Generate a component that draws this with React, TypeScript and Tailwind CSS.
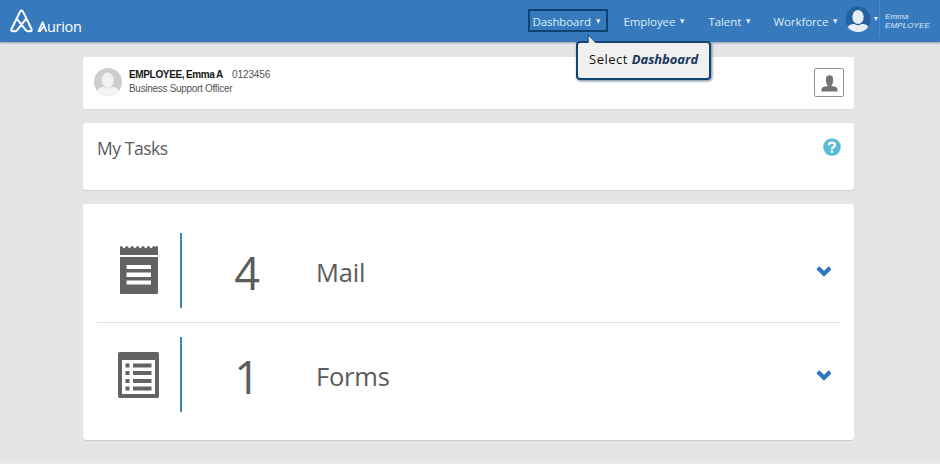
import React from "react";

function AurionLogo() {
  return (
    <div className="ml-[10px] mt-[8px] flex h-[30px] w-[74px] shrink-0">
      <svg className="h-[26px] w-[37px] shrink-0" viewBox="10 8 37 26" fill="none" stroke="#fff" strokeLinecap="round" strokeLinejoin="round">
        <path d="M26.4 18.4L22.8 11.4Q21.5 9.6 20.2 11.4L11.4 29.2Q10.8 31.3 12.8 31.3H15.3Q16.3 31.3 17 30.3L26.4 18.4M16.6 18.4L26 30.3Q26.7 31.3 27.7 31.3H30.2Q32.2 31.3 31.6 29.2L26.4 18.4" strokeWidth="2" />
        <path d="M38.5 31.2L42.7 22.2L46.2 31.2M38.5 31.2H40.2L44.2 25.8" strokeWidth="1.7" />
      </svg>
      <span className="whitespace-nowrap pt-[8px] text-[14.5px] leading-[21px] tracking-[-0.3px] text-white">urion</span>
    </div>
  );
}

function Caret() {
  return (
    <svg className="mr-[2px] h-[5px] w-[5px] shrink-0" viewBox="0 0 5 5" fill="#e3effb">
      <path d="M0 .3H4.6L2.3 4.8Z" />
    </svg>
  );
}

function NavItem({ label, width }: { label: string; width: string }) {
  return (
    <div className={`flex items-center justify-between ${width}`}>
      <span className="whitespace-nowrap pl-[0.5px] pt-px text-[11.5px] leading-[16px] tracking-[-0.1px]">{label}</span>
      <Caret />
    </div>
  );
}

function Header() {
  return (
    <header className="flex h-[42px] shrink-0 bg-[#367abd] text-[#deebf8] shadow-[0_1px_2px_#8f9dab]">
      <AurionLogo />
      <nav className="ml-[444px] flex h-[42px] shrink-0 items-start">
        <div className="relative mt-[9px] h-[23px] w-[80px] border-2 border-[#0d4271] pl-[2px] pt-[2px]">
          <NavItem label="Dashboard" width="w-[71px]" />
          <Callout />
        </div>
        <div className="mt-[13px] flex">
          <div className="ml-[15px]"><NavItem label="Employee" width="w-[64px]" /></div>
          <div className="ml-[21px]"><NavItem label="Talent" width="w-[45px]" /></div>
          <div className="ml-[20px]"><NavItem label="Workforce" width="w-[67px]" /></div>
        </div>
      </nav>
      <svg className="ml-[5px] mt-[6px] h-[27px] w-[27px] shrink-0" viewBox="0 0 27 27">
        <circle cx="13" cy="13" r="12.5" fill="#25619e" />
        <ellipse cx="13" cy="11" rx="5.7" ry="7" fill="#e7edf5" />
        <path d="M2.7 21C4.5 18 8 17.5 10 18.3Q13 20.3 16 18.3C19 17.5 22 18.5 23.3 21C20 25 16.5 26 13 26S5 24.5 2.7 21Z" fill="#e7edf5" />
      </svg>
      <div className="mt-[17px] w-[7px] pl-[2px]"><svg className="h-[4px] w-[4px]" viewBox="0 0 4 4" fill="#e3effb"><path d="M0 0H4L2 4Z" /></svg></div>
      <div className="h-[37px] border-l border-[#4688c9] pl-[5px] pt-[12px] font-['Liberation_Sans',Arial,sans-serif] text-[8px] italic leading-[9px]">
        <div className="tracking-[0.1px]">Emma</div>
        <div className="whitespace-nowrap tracking-[0.1px]">EMPLOYEE</div>
      </div>
    </header>
  );
}

function Callout() {
  return (
    <div className="absolute left-[46px] top-[30px] z-10 h-[39px] w-[135px] rounded-[4px] border-2 border-[#124472] bg-[#f0f0f0] shadow-[1px_1px_3px_#6b7d90]">
      <svg className="absolute left-[8px] top-[-10px] h-[12px] w-[14px]" viewBox="0 0 14 12">
        <path d="M2.5 11V2L10.5 11Z" fill="#f0f0f0" />
        <path d="M2.2 9V2L9 9" fill="none" stroke="#124472" strokeWidth="0.8" />
      </svg>
      <div className="whitespace-nowrap pl-[11px] pt-[7px] text-[13px] leading-[18px] tracking-[0.5px] text-[#111]">
        Select <b className="italic tracking-[-0.05px] text-[#17365d]">Dashboard</b>
      </div>
    </div>
  );
}

function ProfileCard() {
  return (
    <section className="flex h-[52px] shrink-0 rounded-[3px] bg-white shadow-[0_1px_1px_#d8d9db]">
      <svg className="ml-[11px] mt-[11px] h-[28px] w-[28px]" viewBox="0 0 28 28">
        <circle cx="14" cy="14" r="14" fill="#cdcdcd" />
        <path d="M3 22Q6 18.5 10 19Q14 21.5 18 19Q22 18.5 25 22Q21 28 14 28T3 22Z" fill="#f5f5f5" />
        <ellipse cx="13.7" cy="12.3" rx="6" ry="7.7" fill="#f2f2f2" stroke="#dedede" strokeWidth="0.5" />
      </svg>
      <div className="ml-[7px] mt-[11px] font-['Liberation_Sans',Arial,sans-serif] text-[10px] leading-[14px] text-[#555]">
        <div className="flex whitespace-nowrap">
          <b className="w-[103px] text-[10px] tracking-[-0.35px] text-[#161616] [word-spacing:-0.7px]">EMPLOYEE, Emma A</b>
          <span className="tracking-[-0.1px]">0123456</span>
        </div>
        <div className="tracking-[-0.3px]">Business Support Officer</div>
      </div>
      <div className="ml-auto mr-[10px] mt-[11px] flex h-[29px] w-[30px] items-center justify-center rounded-[2px] border border-[#929292]">
        <svg className="mt-[2px] h-[17px] w-[17px]" viewBox="0 0 17 17" fill="#717375">
          <path d="M5 3Q5.5 .3 8.5 .3T12 3V6Q12 9 10.5 10V11L15 12Q16.9 13 16.7 16.5H.3Q.1 13 2 12L6.5 11V10Q5 9 5 6Z" />
        </svg>
      </div>
    </section>
  );
}

function MailIcon() {
  return (
    <svg className="mt-[-1px] h-[50px] w-[38px]" viewBox="0 0 38 50" fill="#636363">
      <path d="M0 2Q1.4 0 2.7 2Q4.1 4.5 5.4 2Q6.8 0 8.1 2Q9.5 4.5 10.8 2Q12.2 0 13.5 2Q14.9 4.5 16.2 2Q17.6 0 19 2Q20.3 4.5 21.7 2Q23 0 24.4 2Q25.8 4.5 27 2Q28.5 0 29.8 2Q31.2 4.5 32.5 2Q34 0 35.2 2Q36.5 0 38 2V10H0Z" />
      <path fillRule="evenodd" d="M0 12H38V48Q38 49 37 49H1Q0 49 0 48ZM6.5 20V24H31V20ZM6.5 27.5V32H31V27.5ZM6.5 35.5V39.5H31V35.5Z" />
    </svg>
  );
}

function FormsIcon() {
  return (
    <svg className="h-[48px] w-[42px]" viewBox="0 0 42 48" fill="#636363">
      <path fillRule="evenodd" d="M1.5 1H39.5Q41 1 41 3V45Q41 47 39.5 47H1.5Q0 47 0 45V3Q0 1 1.5 1ZM4 9V43H37V9Z" />
      <path d="M7.5 12.5H11.5V16.5H7.5ZM15 12.5H33.5V16.5H15ZM7.5 20H11.5V24H7.5ZM15 20H33.5V24H15ZM7.5 28H11.5V32H7.5ZM15 28H33.5V32H15ZM7.5 35.5H11.5V39.5H7.5ZM15 35.5H33.5V39.5H15Z" />
    </svg>
  );
}

function TaskRow({ icon, count, label }: { icon: React.ReactNode; count: string; label: string }) {
  return (
    <div className="flex h-[75px] items-center">
      <div className="flex w-[83px] justify-center">{icon}</div>
      <div className="h-[75px] w-[2px] bg-[#4180b7]" />
      <div className="w-[131px] pr-px pt-[4px] text-center text-[45px] leading-[60px]">{count}</div>
      <div className="pl-[3px] pt-[3px] text-[25.5px] leading-[34px] tracking-[-0.2px]">{label}</div>
      <svg className="ml-auto mr-[9px] mt-[2px] h-[11px] w-[15px]" viewBox="0 0 15 11" fill="none" stroke="#3275b9" strokeWidth="4.2">
        <path d="M1.8 1.8L8 7.8L14.2 1.8" />
      </svg>
    </div>
  );
}

export default function App() {
  return (
    <div className="flex h-[464px] w-[940px] flex-col overflow-hidden bg-[#e4e5e7] font-['Open_Sans',sans-serif]">
      <Header />
      <main className="ml-[83px] mt-[15px] flex w-[771px] flex-col gap-[14px]">
        <ProfileCard />
        <section className="flex h-[67px] items-start justify-between rounded-[3px] bg-white pl-[14px] pr-[13px] pt-[13px] text-[#5b5b5b] shadow-[0_1px_1px_#d0d1d3]">
          <h1 className="text-[17.5px] leading-[24px] tracking-[-0.45px]">My Tasks</h1>
          <svg className="mt-[2px] h-[18px] w-[18px]" viewBox="0 0 18 18" fill="none">
            <circle cx="9" cy="9" r="8.8" fill="#5abbd5" />
            <path d="M6 7.2Q6 4.6 9 4.6T12 7Q12 8.4 10.3 9.2Q9 9.8 9 11.3" stroke="#fff" strokeWidth="2.3" />
            <path d="M7.8 12.5H10.2V14.8H7.8Z" fill="#fff" />
          </svg>
        </section>
        <section className="h-[236px] rounded-[3px] bg-white pl-[14px] pr-[14px] pt-[29px] text-[#5b5b5b] shadow-[0_1px_1px_#c9cacc]">
          <TaskRow icon={<MailIcon />} count="4" label="Mail" />
          <div className="mb-[14px] mt-[14px] h-px bg-[#dddfe1]" />
          <TaskRow icon={<FormsIcon />} count="1" label="Forms" />
        </section>
      </main>
      <div className="mt-[22px] h-px bg-[#eeeff0]" />
    </div>
  );
}
